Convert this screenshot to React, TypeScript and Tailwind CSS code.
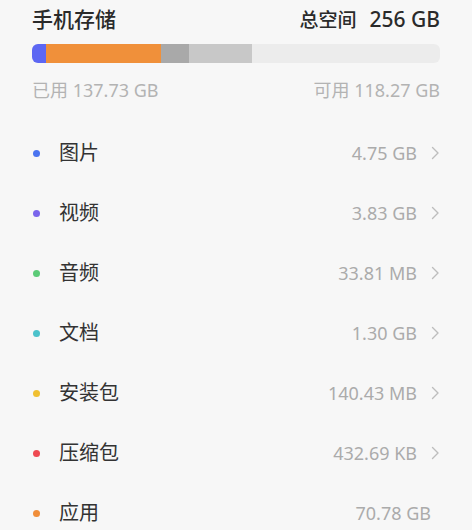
import React from "react";

const rows = [
  { label: "图片", value: "4.75 GB", color: "bg-[#4b74f0]", chevron: true },
  { label: "视频", value: "3.83 GB", color: "bg-[#7a66ec]", chevron: true },
  { label: "音频", value: "33.81 MB", color: "bg-[#5ccb78]", chevron: true },
  { label: "文档", value: "1.30 GB", color: "bg-[#4cc2cb]", chevron: true },
  { label: "安装包", value: "140.43 MB", color: "bg-[#f0c032]", chevron: true },
  { label: "压缩包", value: "432.69 KB", color: "bg-[#ee4a52]", chevron: true },
  { label: "应用", value: "70.78 GB", color: "bg-[#f08e3a]", chevron: false },
];

function Chevron() {
  return (
    <svg width="10" height="14" viewBox="0 0 10 14" className="ml-[13px]" fill="none">
      <path d="M2.5 1.5 L8 7 L2.5 12.5" stroke="#bdbdbd" strokeWidth="1.4" strokeLinecap="round" strokeLinejoin="round" />
    </svg>
  );
}

export default function App() {
  return (
    <div
      className="w-[472px] h-[530px] overflow-hidden bg-[#f7f7f7] px-[32px] pt-[5px]"
      style={{ fontFamily: '"Noto Sans", "Noto Sans CJK SC", sans-serif' }}
    >
      <div className="flex items-center justify-between h-[28px] leading-none font-medium text-[#2a2a2a]">
        <span className="text-[21px]">手机存储</span>
        <span className="flex items-baseline">
          <span className="text-[19px]">总空间</span>
          <span className="text-[21px] ml-[13px]">256 GB</span>
        </span>
      </div>
      <div className="mt-[11px] h-[19px] w-full rounded-[6px] overflow-hidden bg-[#ececec] flex">
        <div className="w-[14px] bg-[#5d67f3]" />
        <div className="w-[115px] bg-[#f0903a]" />
        <div className="w-[28px] bg-[#a9a9a9]" />
        <div className="w-[63px] bg-[#c8c8c8]" />
      </div>
      <div className="mt-[15px] flex items-center justify-between h-[24px] leading-none text-[18px] text-[#b3b3b3]">
        <span>已用 137.73 GB</span>
        <span>可用 118.27 GB</span>
      </div>
      <div className="mt-[21px] flex flex-col">
        {rows.map((r) => (
          <div key={r.label} className="h-[60px] flex items-center leading-none">
            <div className={`w-[7px] h-[7px] rounded-full ${r.color} ml-[1px]`} />
            <span className="ml-[19px] text-[20px] text-[#333333]">{r.label}</span>
            <div className="ml-auto flex items-center">
              <span className={`text-[18px] text-[#ababab] ${r.chevron ? "" : "mr-[9px]"}`}>{r.value}</span>
              {r.chevron && <Chevron />}
            </div>
          </div>
        ))}
      </div>
    </div>
  );
}
